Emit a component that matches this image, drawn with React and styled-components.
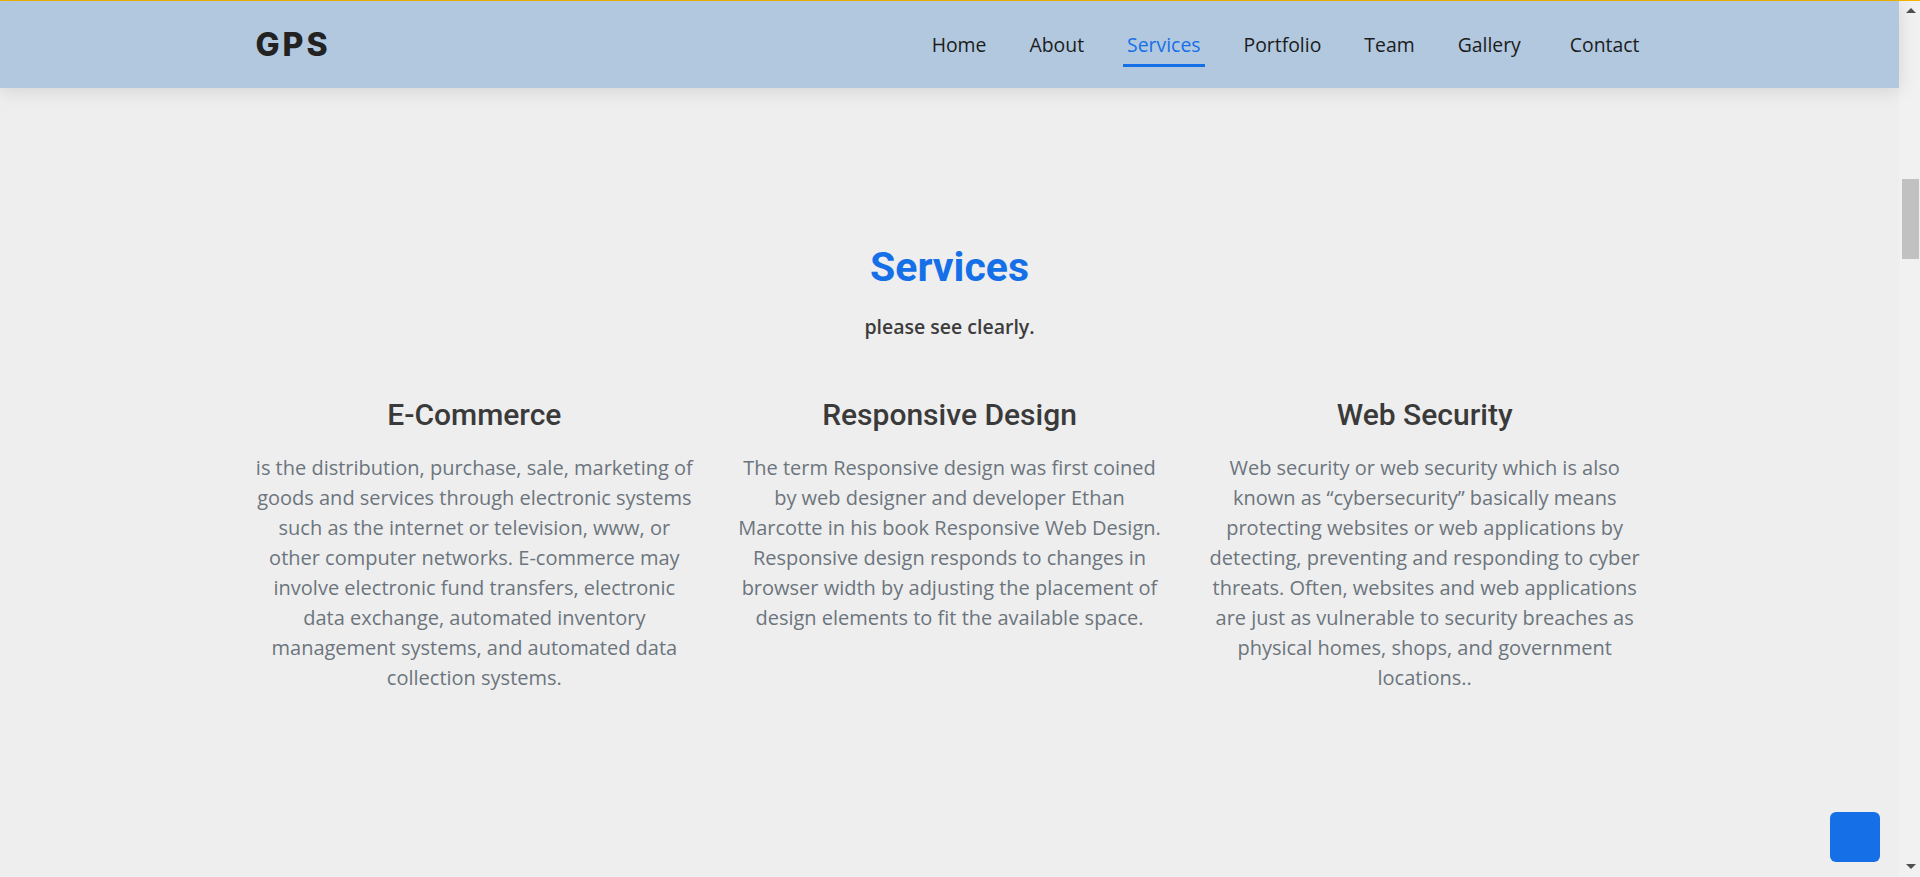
import React from "react";
import styled, { createGlobalStyle } from "styled-components";

const Global = createGlobalStyle`
  html, body { margin: 0; padding: 0; height: 100%; overflow: hidden; }
  body { background: #eeeeee; font-family: "Open Sans", "Liberation Sans", sans-serif; }
  * { box-sizing: border-box; }
`;

const Frame = styled.div`
  display: flex;
  flex-direction: column;
  height: 100vh;
`;

const TopLine = styled.div`
  height: 1px;
  background: #f4b400;
  flex: none;
`;

const Body = styled.div`
  flex: 1;
  display: flex;
  min-height: 0;
`;

const Page = styled.div`
  flex: 1;
  display: flex;
  flex-direction: column;
  background: #eeeeee;
  min-width: 0;
`;

const Header = styled.header`
  height: 87px;
  background: #b1c8df;
  box-shadow: 0 2px 18px rgba(0, 0, 0, 0.12);
  position: relative;
  z-index: 2;
  flex: none;
`;

const Container = styled.div`
  width: 1388px;
  margin: 0 auto;
  height: 100%;
`;

const HeaderRow = styled(Container)`
  display: flex;
  align-items: center;
  justify-content: space-between;
`;

const Logo = styled.a`
  font-family: "Inter", "Liberation Sans", sans-serif;
  font-weight: 800;
  font-size: 32px;
  letter-spacing: 3px;
  color: #222222;
  text-decoration: none;
  margin-top: -1px;
`;

const Nav = styled.nav`
  display: flex;
  align-items: center;
  gap: 35px;
  margin-right: 0;
`;

const NavLink = styled.a`
  font-family: "Open Sans", sans-serif;
  font-size: 19.4px;
  font-weight: 500;
  color: ${(p) => (p.$active ? "#1570e8" : "#1c1c1c")};
  text-decoration: none;
  padding: 4px 4px 6px;
  margin-left: ${(p) => (p.$extra ? "6px" : "0")};
  border-bottom: 3px solid ${(p) => (p.$active ? "#1570e8" : "transparent")};
  margin-top: 6px;
  line-height: 26px;
`;

const Section = styled.section`
  padding-top: 155px;
`;

const Title = styled.h2`
  margin: 0;
  text-align: center;
  font-family: "Roboto", sans-serif;
  font-weight: 700;
  font-size: 41px;
  line-height: 48px;
  color: #1570e8;
`;

const Subtitle = styled.p`
  margin: 21px 0 0;
  text-align: center;
  font-family: "Open Sans", sans-serif;
  font-weight: 600;
  font-size: 19.5px;
  line-height: 30px;
  color: #3c3c3c;
`;

const Grid = styled.div`
  width: 1388px;
  margin: 55px auto 0;
  display: grid;
  grid-template-columns: repeat(3, 1fr);
  column-gap: 37.5px;
`;

const Card = styled.div`
  text-align: center;
`;

const CardTitle = styled.h3`
  margin: 0 0 20px;
  font-family: "Roboto", sans-serif;
  font-weight: 500;
  font-size: 30px;
  line-height: 36px;
  color: #3a3a3a;
`;

const CardText = styled.p`
  margin: 0;
  font-family: "Open Sans", sans-serif;
  font-size: 20px;
  line-height: 30px;
  color: #6c757d;
`;

const BackToTop = styled.a`
  position: fixed;
  right: 40px;
  bottom: 15px;
  width: 50px;
  height: 50px;
  border-radius: 6px;
  background: #1570e8;
`;

const ScrollTrack = styled.div`
  width: 21px;
  flex: none;
  background: #f1f1f1;
  display: flex;
  flex-direction: column;
  align-items: center;
`;

const ArrowBox = styled.div`
  height: 20px;
  width: 100%;
  display: flex;
  align-items: center;
  justify-content: center;
  padding-left: 2px;
`;

const Thumb = styled.div`
  margin-top: 158px;
  width: 17px;
  height: 80px;
  background: #c1c1c1;
  margin-left: 2px;
`;

const Spacer = styled.div`
  flex: 1;
`;

const Arrow = ({ down }) => (
  <svg width="10" height="6" viewBox="0 0 10 6">
    <polygon points={down ? "0,0 10,0 5,5" : "0,5 10,5 5,0"} fill="#505050" />
  </svg>
);

const links = ["Home", "About", "Services", "Portfolio", "Team", "Gallery", "Contact"];

const services = [
  {
    title: "E-Commerce",
    text:
      "is the distribution, purchase, sale, marketing of goods and services through electronic systems such as the internet or television, www, or other computer networks. E-commerce may involve electronic fund transfers, electronic data exchange, automated inventory management systems, and automated data collection systems.",
  },
  {
    title: "Responsive Design",
    text:
      "The term Responsive design was first coined by web designer and developer Ethan Marcotte in his book Responsive Web Design. Responsive design responds to changes in browser width by adjusting the placement of design elements to fit the available space.",
  },
  {
    title: "Web Security",
    text:
      "Web security or web security which is also known as \u201Ccybersecurity\u201D basically means protecting websites or web applications by detecting, preventing and responding to cyber threats. Often, websites and web applications are just as vulnerable to security breaches as physical homes, shops, and government locations..",
  },
];

export default function App() {
  return (
    <>
      <Global />
      <Frame>
        <TopLine />
        <Body>
          <Page>
            <Header>
              <HeaderRow>
                <Logo href="#">GPS</Logo>
                <Nav>
                  {links.map((l) => (
                    <NavLink key={l} href="#" $active={l === "Services"} $extra={l === "Contact"}>
                      {l}
                    </NavLink>
                  ))}
                </Nav>
              </HeaderRow>
            </Header>
            <Section>
              <Title>Services</Title>
              <Subtitle>please see clearly.</Subtitle>
              <Grid>
                {services.map((s) => (
                  <Card key={s.title}>
                    <CardTitle>{s.title}</CardTitle>
                    <CardText>{s.text}</CardText>
                  </Card>
                ))}
              </Grid>
            </Section>
            <BackToTop href="#" aria-label="Back to top" />
          </Page>
          <ScrollTrack>
            <ArrowBox>
              <Arrow />
            </ArrowBox>
            <Thumb />
            <Spacer />
            <ArrowBox>
              <Arrow down />
            </ArrowBox>
          </ScrollTrack>
        </Body>
      </Frame>
    </>
  );
}
